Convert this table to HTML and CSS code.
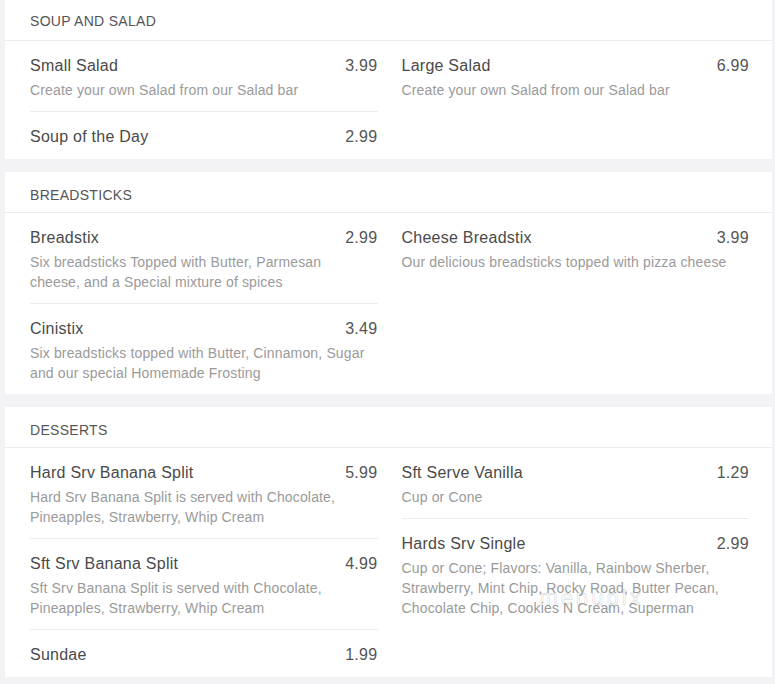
FILE: index.html
```html
<!DOCTYPE html>
<html>
<head>
<meta charset="utf-8">
<link rel="stylesheet" href="styles.css">
</head>
<body>
<div class="page">
  <section class="card card-first">
    <h2 class="card-title">SOUP AND SALAD</h2>
    <div class="cols">
      <div class="col">
        <div class="item">
          <div class="row"><span class="name">Small Salad</span><span class="price">3.99</span></div>
          <p class="desc">Create your own Salad from our Salad bar</p>
        </div>
        <div class="item">
          <div class="row"><span class="name">Soup of the Day</span><span class="price">2.99</span></div>
        </div>
      </div>
      <div class="col">
        <div class="item">
          <div class="row"><span class="name">Large Salad</span><span class="price">6.99</span></div>
          <p class="desc">Create your own Salad from our Salad bar</p>
        </div>
      </div>
    </div>
  </section>

  <section class="card">
    <h2 class="card-title">BREADSTICKS</h2>
    <div class="cols">
      <div class="col">
        <div class="item">
          <div class="row"><span class="name">Breadstix</span><span class="price">2.99</span></div>
          <p class="desc">Six breadsticks Topped with Butter, Parmesan cheese, and a Special mixture of spices</p>
        </div>
        <div class="item">
          <div class="row"><span class="name">Cinistix</span><span class="price">3.49</span></div>
          <p class="desc">Six breadsticks topped with Butter, Cinnamon, Sugar and our special Homemade Frosting</p>
        </div>
      </div>
      <div class="col">
        <div class="item">
          <div class="row"><span class="name">Cheese Breadstix</span><span class="price">3.99</span></div>
          <p class="desc">Our delicious breadsticks topped with pizza cheese</p>
        </div>
      </div>
    </div>
  </section>

  <section class="card">
    <h2 class="card-title">DESSERTS</h2>
    <div class="cols">
      <div class="col">
        <div class="item">
          <div class="row"><span class="name">Hard Srv Banana Split</span><span class="price">5.99</span></div>
          <p class="desc">Hard Srv Banana Split is served with Chocolate, Pineapples, Strawberry, Whip Cream</p>
        </div>
        <div class="item">
          <div class="row"><span class="name">Sft Srv Banana Split</span><span class="price">4.99</span></div>
          <p class="desc">Sft Srv Banana Split is served with Chocolate, Pineapples, Strawberry, Whip Cream</p>
        </div>
        <div class="item">
          <div class="row"><span class="name">Sundae</span><span class="price">1.99</span></div>
        </div>
      </div>
      <div class="col">
        <div class="item">
          <div class="row"><span class="name">Sft Serve Vanilla</span><span class="price">1.29</span></div>
          <p class="desc">Cup or Cone</p>
        </div>
        <div class="item">
          <div class="row"><span class="name">Hards Srv Single</span><span class="price">2.99</span></div>
          <p class="desc">Cup or Cone; Flavors: Vanilla, Rainbow Sherber, Strawberry, Mint Chip, Rocky Road, Butter Pecan, Chocolate Chip, Cookies N Cream, Superman</p>
          <span class="watermark" aria-hidden="true">menupix</span>
        </div>
      </div>
    </div>
  </section>
</div>
</body>
</html>
```

FILE: styles.css
```css
html, body {
  margin: 0;
  padding: 0;
  background: #f3f3f6;
}

body {
  font-family: "Liberation Sans", Arial, sans-serif;
}

.page {
  display: flex;
  flex-direction: column;
  gap: 13px;
  padding: 0 3px 0 5px;
}

.card {
  background: #ffffff;
}

.card-title {
  margin: 0;
  padding: 13px 25px 7px;
  font-size: 14px;
  line-height: 20px;
  font-weight: normal;
  letter-spacing: 0.3px;
  color: #555555;
  border-bottom: 1px solid #ececef;
}

.card-first .card-title {
  padding: 11px 25px 9px;
}

.cols {
  display: grid;
  grid-template-columns: 1fr 1fr;
  column-gap: 24px;
  padding: 0 23px 0 25px;
}

.col {
  display: flex;
  flex-direction: column;
}

.item {
  padding: 14px 0 11px;
  position: relative;
}

.item + .item {
  border-top: 1px solid #ececef;
}

.row {
  display: flex;
  justify-content: space-between;
  font-size: 16px;
  line-height: 22px;
  color: #4a4a4a;
}

.name {
  letter-spacing: 0.25px;
}

.price {
  color: #555555;
  letter-spacing: 0.3px;
}

.desc {
  margin: 3px 0 0;
  font-size: 14px;
  line-height: 20px;
  letter-spacing: 0.15px;
  color: #9a9a9a;
  padding-right: 10px;
}

.watermark {
  position: absolute;
  left: 138px;
  top: 66px;
  font-size: 22px;
  line-height: 26px;
  letter-spacing: 3px;
  color: transparent;
  -webkit-text-stroke: 0.5px rgba(130, 130, 130, 0.4);
  pointer-events: none;
}
```
